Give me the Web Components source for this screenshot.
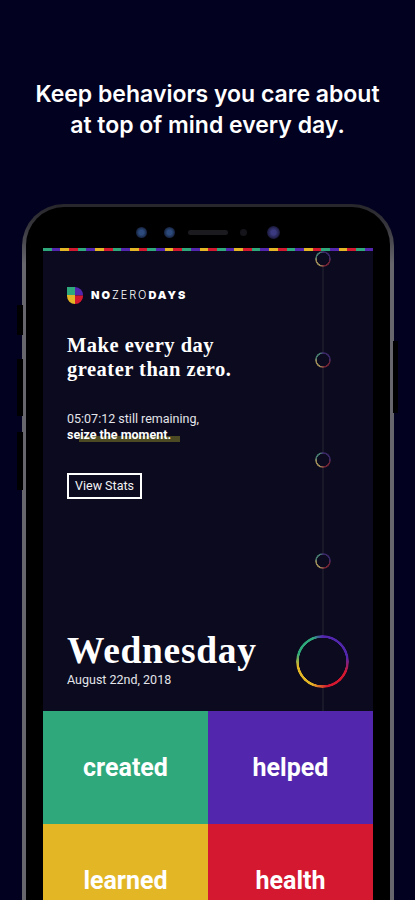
<!DOCTYPE html>
<html>
<head>
<meta charset="utf-8">
<title>No Zero Days</title>
<style>
    html, body { margin: 0; height: 900px; overflow: hidden; background: #02011f; }
    body { font-family: "Roboto", "Liberation Sans", sans-serif; color: #fff; }
</style>
</head>
<body>
<store-page>
    <span slot="headline">Keep behaviors you care about<br>at top of mind every day.</span>
    <phone-frame>
        <nzd-screen>
            <nzd-logo slot="logo"></nzd-logo>
            <span slot="tagline">Make every day<br>greater than zero.</span>
            <nzd-countdown slot="countdown" time="05:07:12"></nzd-countdown>
            <nzd-button slot="action">View Stats</nzd-button>
            <span slot="day">Wednesday</span>
            <span slot="date">August 22nd, 2018</span>
            <nzd-tile slot="tiles" style="--tile:#2fa97c">created</nzd-tile>
            <nzd-tile slot="tiles" style="--tile:#5227ad">helped</nzd-tile>
            <nzd-tile slot="tiles" style="--tile:#e3b626">learned</nzd-tile>
            <nzd-tile slot="tiles" style="--tile:#d3182f">health</nzd-tile>
        </nzd-screen>
    </phone-frame>
</store-page>

<script>
class StorePage extends HTMLElement {
    constructor() {
        super();
        this.attachShadow({ mode: 'open' });
        this.shadowRoot.innerHTML = `
            <style>
                :host {
                    display: block;
                    height: 900px;
                    overflow: hidden;
                    background: #02011f;
                }
                h1 {
                    margin: 0;
                    padding-top: 79px;
                    height: 125px;
                    box-sizing: border-box;
                    font: 600 23px/31px "Inter", "Liberation Sans", sans-serif;
                    text-align: center;
                    color: #fff;
                }
            </style>
            <h1><slot name="headline"></slot></h1>
            <slot></slot>
        `;
    }
}

class PhoneFrame extends HTMLElement {
    constructor() {
        super();
        this.attachShadow({ mode: 'open' });
        this.shadowRoot.innerHTML = `
            <style>
                :host {
                    display: block;
                    position: relative;
                    box-sizing: border-box;
                    width: 372px;
                    height: 760px;
                    margin: 79px 0 0 22px;
                    padding: 44px 0 0 21px;
                    background: linear-gradient(#26262b 0, #36363c 22px, #66666c 60px);
                    border-radius: 42px 42px 0 0;
                }
                :host::before {
                    content: "";
                    position: absolute;
                    top: 3px;
                    left: 4px;
                    right: 4px;
                    bottom: 0;
                    background: #000;
                    border-radius: 38px 38px 0 0;
                }
                .side {
                    position: absolute;
                    width: 6px;
                    background: #000;
                }
                .l { left: -5px; }
                .r { right: -4px; width: 5px; }
                .sensors {
                    position: absolute;
                    top: 21px;
                    left: 0;
                    right: 0;
                    height: 16px;
                    filter: blur(.5px);
                }
                .sensors i {
                    position: absolute;
                    top: 2px;
                    width: 11px;
                    height: 11px;
                    border-radius: 50%;
                    background: radial-gradient(circle, #2c4a7c 0 30%, #16233f 70%);
                }
                .sensors .speaker {
                    top: 5px;
                    width: 40px;
                    height: 5px;
                    border-radius: 3px;
                    background: #1a1a1f;
                }
                .sensors .dot {
                    top: 4px;
                    width: 7px;
                    height: 7px;
                    background: #14141a;
                }
                .sensors .lens {
                    width: 13px;
                    height: 13px;
                    top: 1px;
                    background: radial-gradient(circle, #3b3a80 0 25%, #191838 70%);
                }
            </style>
            <div class="side l" style="top:101px;height:30px"></div>
            <div class="side l" style="top:155px;height:57px"></div>
            <div class="side l" style="top:228px;height:58px"></div>
            <div class="side r" style="top:137px;height:72px"></div>
            <div class="sensors">
                <i style="left:114px"></i>
                <i style="left:142px"></i>
                <i class="speaker" style="left:166px"></i>
                <i class="dot" style="left:218px"></i>
                <i class="lens" style="left:245px"></i>
            </div>
            <slot></slot>
        `;
    }
}

class NzdScreen extends HTMLElement {
    constructor() {
        super();
        this.attachShadow({ mode: 'open' });
        this.shadowRoot.innerHTML = `
            <style>
                :host {
                    display: block;
                    position: relative;
                    width: 330px;
                    height: 716px;
                    overflow: hidden;
                    background: #0b0a1e;
                }
                .stripe {
                    height: 3px;
                    background: repeating-linear-gradient(90deg,
                        #2fa97c 0 8.7px, #5227ad 8.7px 17.4px,
                        #e3b626 17.4px 26.1px, #d3182f 26.1px 34.8px);
                }
                .top {
                    height: 460px;
                    box-sizing: border-box;
                    padding: 36px 24px 0;
                    display: flex;
                    flex-direction: column;
                    align-items: flex-start;
                }
                .tagline {
                    margin-top: 30px;
                    font: 700 20.5px/24px "Liberation Serif", serif;
                    letter-spacing: .5px;
                }
                .action { margin-top: 30px; }
                .count { margin-top: 30px; }
                .day {
                    margin-top: 132px;
                    font: 700 37.5px/40px "Liberation Serif", serif;
                    letter-spacing: .7px;
                }
                .date {
                    font: 400 12.5px/17px "Roboto", sans-serif;
                    color: #e4e4ea;
                }
                .tiles {
                    display: grid;
                    grid-template-columns: 165px 165px;
                    grid-auto-rows: 113px;
                }
                .line {
                    position: absolute;
                    left: 279px;
                    top: 3px;
                    width: 2px;
                    height: 460px;
                    background: #191829;
                }
                nzd-ring { position: absolute; }
                .node { --size: 16px; --w: 1.5px; --dim: .6; --tone: saturate(.55) brightness(1.25); }
            </style>
            <div class="stripe"></div>
            <div class="line"></div>
            <nzd-ring class="node" style="left:272px;top:3px"></nzd-ring>
            <nzd-ring class="node" style="left:272px;top:104px"></nzd-ring>
            <nzd-ring class="node" style="left:272px;top:204px"></nzd-ring>
            <nzd-ring class="node" style="left:272px;top:305px"></nzd-ring>
            <nzd-ring style="left:253px;top:387px;--size:53px;--w:2.5px"></nzd-ring>
            <div class="top">
                <slot name="logo"></slot>
                <div class="tagline"><slot name="tagline"></slot></div>
                <div class="count"><slot name="countdown"></slot></div>
                <div class="action"><slot name="action"></slot></div>
                <div class="day"><slot name="day"></slot></div>
                <div class="date"><slot name="date"></slot></div>
            </div>
            <div class="tiles"><slot name="tiles"></slot></div>
        `;
    }
}

class NzdLogo extends HTMLElement {
    constructor() {
        super();
        this.attachShadow({ mode: 'open' });
        this.shadowRoot.innerHTML = `
            <style>
                :host {
                    display: flex;
                    align-items: center;
                    gap: 8px;
                    height: 16px;
                }
                svg { display: block; }
                span {
                    font: 300 11px/16px "Inter", "Liberation Sans", sans-serif;
                    letter-spacing: 1.95px;
                    color: #fff;
                }
                b { font-weight: 900; }
            </style>
            <svg width="16" height="17" viewBox="0 0 16 17">
                <path d="M0 0H8V8H0Z" fill="#2fa97c"/>
                <path d="M8 0A8 8 0 0 1 16 8.500H8Z" fill="#5227ad"/>
                <path d="M16 8.500A8 8 0 0 1 8 17V8.500Z" fill="#d3182f"/>
                <path d="M8 17A8 8 0 0 1 0 9V8H8Z" fill="#e3b626"/>
            </svg>
            <span><b>NO</b>ZERO<b>DAYS</b></span>
        `;
    }
}

class NzdCountdown extends HTMLElement {
    constructor() {
        super();
        this.attachShadow({ mode: 'open' });
        const time = this.getAttribute('time');
        this.shadowRoot.innerHTML = `
            <style>
                :host {
                    display: block;
                    position: relative;
                    font: 400 12.5px/16px "Roboto", sans-serif;
                    color: #e4e4ea;
                }
                b {
                    position: relative;
                    font-weight: 700;
                    color: #fff;
                }
                .mark {
                    position: absolute;
                    left: 12px;
                    top: 25px;
                    width: 101px;
                    height: 6px;
                    background: #4b4a22;
                    filter: blur(.6px);
                }
            </style>
            <div class="mark"></div>
            <div>${time} still remaining,</div>
            <b>seize the moment.</b>
        `;
    }
}

class NzdButton extends HTMLElement {
    constructor() {
        super();
        this.attachShadow({ mode: 'open' });
        this.shadowRoot.innerHTML = `
            <style>
                :host {
                    display: inline-block;
                    box-sizing: border-box;
                    height: 26px;
                    padding: 0 6px;
                    border: 2px solid #fff;
                    font: 400 12.5px/22px "Roboto", sans-serif;
                    color: #f2f2f5;
                }
            </style>
            <slot></slot>
        `;
    }
}

class NzdRing extends HTMLElement {
    constructor() {
        super();
        this.attachShadow({ mode: 'open' });
        this.shadowRoot.innerHTML = `
            <style>
                :host {
                    display: block;
                    width: var(--size);
                    height: var(--size);
                    border-radius: 50%;
                    background: #0b0a1e;
                }
                div {
                    width: 100%;
                    height: 100%;
                    border-radius: 50%;
                    opacity: var(--dim, 1);
                    filter: var(--tone, none);
                    background: conic-gradient(#5227ad 0 22%, #d3182f 32% 47%, #e3b626 57% 72%, #2fa97c 80% 94%, #5227ad);
                    -webkit-mask: radial-gradient(closest-side, transparent calc(100% - var(--w) - .5px), #000 calc(100% - var(--w)));
                    mask: radial-gradient(closest-side, transparent calc(100% - var(--w) - .5px), #000 calc(100% - var(--w)));
                }
            </style>
            <div></div>
        `;
    }
}

class NzdTile extends HTMLElement {
    constructor() {
        super();
        this.attachShadow({ mode: 'open' });
        this.shadowRoot.innerHTML = `
            <style>
                :host {
                    display: flex;
                    align-items: center;
                    justify-content: center;
                    background: var(--tile);
                    font: 700 25px/30px "Roboto", sans-serif;
                    color: #fff;
                }
            </style>
            <slot></slot>
        `;
    }
}

customElements.define('store-page', StorePage);
customElements.define('phone-frame', PhoneFrame);
customElements.define('nzd-screen', NzdScreen);
customElements.define('nzd-logo', NzdLogo);
customElements.define('nzd-countdown', NzdCountdown);
customElements.define('nzd-button', NzdButton);
customElements.define('nzd-ring', NzdRing);
customElements.define('nzd-tile', NzdTile);
</script>
</body>
</html>
